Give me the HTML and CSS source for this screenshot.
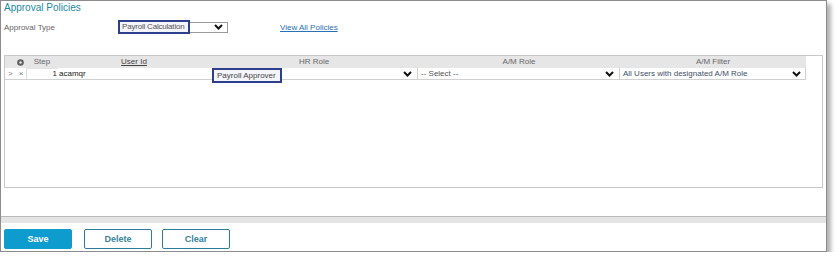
FILE: index.html
```html
<!DOCTYPE html>
<html lang="en">
<head>
  <meta charset="UTF-8">
  <title>Approval Policies</title>
  <link rel="stylesheet" href="styles.css">
</head>
<body>
  <div class="frame">
    <div class="main">
      <div class="title">Approval Policies</div>
      <div class="type-row">
        <span class="label">Approval Type</span>
        <div class="select type-select">
          <span class="mark">Payroll Calculation</span>
          <svg class="chev" width="9" height="6" viewBox="0 0 9 6"><polyline points="1,1 4.5,4.5 8,1" fill="none" stroke="#111" stroke-width="2"/></svg>
        </div>
        <a class="link" href="#">View All Policies</a>
      </div>

      <div class="panel">
        <div class="grid head">
          <div class="cell gear">
            <svg width="7" height="7" viewBox="0 0 7 7"><circle cx="3.5" cy="3.5" r="3.3" fill="#5f5f5f"/><circle cx="3.5" cy="3.5" r="1.2" fill="#e8e8e8"/></svg>
          </div>
          <div class="cell">Step</div>
          <div class="cell"><u class="sort">User Id</u></div>
          <div class="cell">HR Role</div>
          <div class="cell">A/M Role</div>
          <div class="cell">A/M Filter</div>
        </div>
        <div class="grid row">
          <div class="cell icons"><span class="arrow">&gt;</span><span class="del">&times;</span></div>
          <div class="cell step">1</div>
          <div class="cell user">acamqr</div>
          <div class="cell sel">
            <span class="mark">Payroll Approver</span>
            <svg class="chev" width="9" height="6" viewBox="0 0 9 6"><polyline points="1,1 4.5,4.5 8,1" fill="none" stroke="#111" stroke-width="2"/></svg>
          </div>
          <div class="cell sel">
            <span class="muted">-- Select --</span>
            <svg class="chev" width="9" height="6" viewBox="0 0 9 6"><polyline points="1,1 4.5,4.5 8,1" fill="none" stroke="#111" stroke-width="2"/></svg>
          </div>
          <div class="cell sel last">
            <span class="filter">All Users with designated A/M Role</span>
            <svg class="chev" width="9" height="6" viewBox="0 0 9 6"><polyline points="1,1 4.5,4.5 8,1" fill="none" stroke="#111" stroke-width="2"/></svg>
          </div>
        </div>
      </div>
    </div>

    <div class="footer">
      <div class="band"></div>
      <div class="buttons">
        <button class="btn primary">Save</button>
        <button class="btn">Delete</button>
        <button class="btn">Clear</button>
      </div>
    </div>
  </div>
</body>
</html>
```

FILE: styles.css
```css
body {
  margin: 0;
  background: #fff;
  font-family: "Liberation Sans", Arial, sans-serif;
  font-size: 8px;
  color: #333;
}
.frame {
  width: 827px;
  height: 252px;
  box-sizing: border-box;
  border: 1px solid #8c8c8c;
  box-shadow: 4px 4px 4px rgba(0, 0, 0, 0.3);
  display: flex;
  flex-direction: column;
}
.main {
  flex: 1;
  padding: 1px 3px 0 3px;
}
.title {
  font-size: 10px;
  line-height: 12px;
  color: #1b8aa3;
}
.type-row {
  display: flex;
  align-items: center;
  height: 14px;
  margin-top: 6px;
}
.label {
  width: 114px;
  color: #666;
}
.select {
  position: relative;
  box-sizing: border-box;
  border: 1px solid #9a9a9a;
  display: flex;
  align-items: center;
  background: #fff;
}
.chev {
  margin-left: auto;
}
.type-select {
  width: 110px;
  height: 11px;
  padding-right: 4px;
}
.mark {
  position: absolute;
  box-sizing: border-box;
  border: 2px solid #2d3e8c;
  background: #f4f4fb;
  color: #555;
  line-height: 10px;
  padding: 0 2px;
  white-space: nowrap;
}
.type-select .mark {
  left: -1px;
  top: -3px;
  width: 72px;
  height: 14px;
  letter-spacing: -0.2px;
}
.link {
  margin-left: 52px;
  color: #2a6fb8;
  text-decoration: underline;
}
.panel {
  margin-top: 21px;
  height: 133px;
  box-sizing: border-box;
  border: 1px solid #c8c8c8;
}
.grid {
  display: grid;
  grid-template-columns: 21px 32px 152px 208px 202px 186px;
  width: 801px;
}
.head {
  background: #e6e6e6;
  height: 12px;
  line-height: 12px;
  color: #666;
}
.head .cell {
  text-align: center;
}
.head .gear {
  display: flex;
  align-items: center;
  justify-content: flex-end;
  padding-right: 2px;
}
.sort {
  color: #444;
}
.row {
  height: 12px;
  box-sizing: border-box;
  border-bottom: 1px solid #d0d0d0;
  border-right: 1px solid #d0d0d0;
  line-height: 11px;
}
.row .cell {
  box-sizing: border-box;
  height: 11px;
}
.icons {
  display: flex;
  gap: 6px;
  padding-left: 3px;
  color: #777;
}
.step {
  border-left: 1px solid #ddd;
  border-top: 1px solid #e4e4e4;
  text-align: right;
  padding-right: 1px;
  color: #222;
  line-height: 10px;
}
.user {
  padding-left: 1px;
  color: #222;
}
.sel {
  position: relative;
  display: flex;
  align-items: center;
  padding: 0 5px 0 3px;
  border-right: 1px solid #d0d0d0;
}
.sel.last {
  border-right: none;
}
.sel .mark {
  left: 2px;
  top: 0;
  width: 70px;
  height: 15px;
  color: #444;
  line-height: 11px;
  padding-left: 3px;
}
.muted {
  color: #555;
}
.filter {
  color: #3d4f6a;
}
.footer {
  border-top: 1px solid #b9b9b9;
}
.band {
  height: 6px;
  background: #e4e4e4;
}
.buttons {
  display: flex;
  gap: 10px;
  padding: 6px 3px 2px;
}
.btn {
  width: 68px;
  height: 20px;
  box-sizing: border-box;
  border: 1px solid #2b7d98;
  border-radius: 2px;
  background: #fff;
  color: #37819b;
  font-family: "Liberation Sans", Arial, sans-serif;
  font-size: 9px;
  font-weight: bold;
  cursor: pointer;
}
.btn.primary {
  background: #0e9ccf;
  border-color: #0e9ccf;
  color: #fff;
  margin-right: 2px;
}
```
